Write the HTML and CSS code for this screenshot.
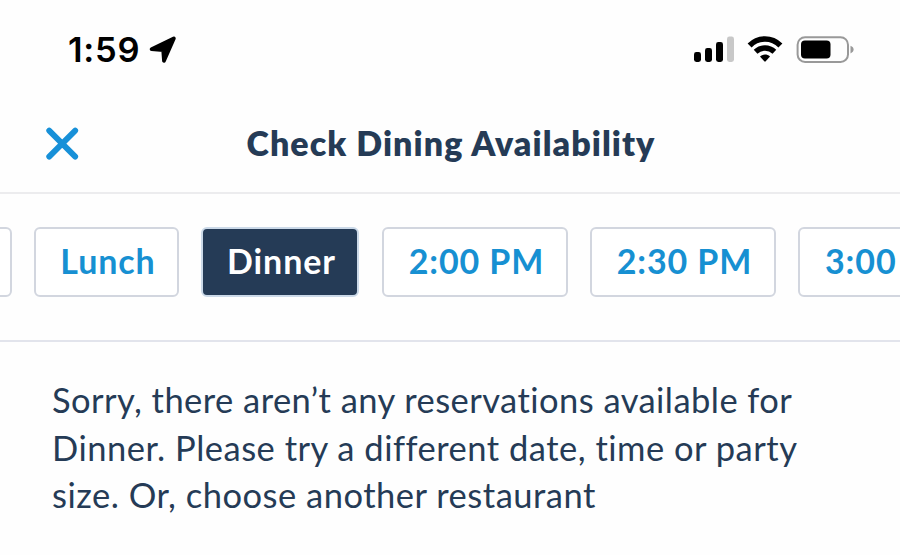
FILE: index.html
```html
<!DOCTYPE html>
<html lang="en">
<head>
    <meta charset="UTF-8">
    <meta name="viewport" content="width=device-width, initial-scale=1.0">
    <title>Check Dining Availability</title>
    <link rel="stylesheet" href="styles.css">
</head>
<body>

    <div class="status-bar">
        <div class="clock">
            <span class="time">1:59</span>
            <svg class="location" width="28" height="28" viewBox="0 0 28 28">
                <path d="M2.6 13.1 L24.8 2.4 L15 24.8 L14.2 14 Z" fill="#000" stroke="#000" stroke-width="3.8" stroke-linejoin="round"/>
            </svg>
        </div>
        <div class="status-icons">
            <svg class="signal" width="40" height="27" viewBox="0 0 40 27">
                <rect x="0" y="16" width="7" height="10" rx="2.4"/>
                <rect x="11" y="12" width="7" height="14" rx="2.4"/>
                <rect x="22" y="6" width="7" height="20" rx="2.4"/>
                <rect x="33" y="0.5" width="7" height="25.5" rx="2.4" fill="#c8c8c8"/>
            </svg>
            <svg class="wifi" width="36" height="27" viewBox="0 0 36 27">
                <path d="M2.6 9.4 C11.2 0.8 24.8 0.8 33.4 9.4" fill="none" stroke="#000" stroke-width="5.6"/>
                <path d="M8.6 15.8 C14 10.7 22 10.7 27.4 15.8" fill="none" stroke="#000" stroke-width="5.4"/>
                <path d="M13 20.4 C16 18 20 18 23 20.4 L18.7 25.3 Q18 26 17.3 25.3 Z"/>
            </svg>
            <svg class="battery" width="58" height="28" viewBox="0 0 58 28">
                <rect x="1.6" y="1.2" width="50.4" height="24.8" rx="7.5" fill="none" stroke="#999" stroke-width="2"/>
                <rect x="5" y="4.5" width="29.5" height="18" rx="4"/>
                <path d="M54.5 9.8 Q57.6 11 57.6 13.6 Q57.6 16.2 54.5 17.4 Z" fill="#999"/>
            </svg>
        </div>
    </div>

    <header class="header">
        <button class="close-btn" aria-label="Close">
            <svg width="34" height="34" viewBox="0 0 34 34">
                <path d="M4.2 3.6 L30.2 29.6 M30.2 3.6 L4.2 29.6" stroke="#1790d8" stroke-width="5.8" stroke-linecap="round"/>
            </svg>
        </button>
        <h1>Check Dining Availability</h1>
    </header>

    <nav class="times">
        <button class="chip chip-meal"></button>
        <button class="chip chip-lunch">Lunch</button>
        <button class="chip chip-dinner selected">Dinner</button>
        <button class="chip">2:00 PM</button>
        <button class="chip">2:30 PM</button>
        <button class="chip chip-last">3:00</button>
    </nav>

    <main class="message">
        <p>
            <span class="line line-1">Sorry, there aren’t any reservations available for</span>
            <span class="line line-2">Dinner. Please try a different date, time or party</span>
            <span class="line line-3">size. Or, choose another restaurant</span>
        </p>
    </main>

</body>
</html>
```
FILE: styles.css
```css
* {
    box-sizing: border-box;
}
body {
    margin: 0;
    background-color: #fefefe;
    font-family: Lato, "Open Sans", sans-serif;
    color: #253b56;
    overflow: hidden;
}
/* Status bar */
.status-bar {
    display: flex;
    justify-content: space-between;
    height: 96px;
    padding: 36px 46px 0 68px;
}
.clock {
    display: flex;
}
.time {
    width: 71px;
    font-family: Inter, sans-serif;
    font-size: 34.5px;
    font-weight: 600;
    line-height: 28px;
    letter-spacing: 0.7px;
    white-space: nowrap;
    color: #000;
}
.location {
    margin-left: 10px;
}
.status-icons {
    display: flex;
}
.signal {
    margin-right: 13px;
}
.wifi {
    margin-right: 13px;
}
/* Header */
.header {
    display: grid;
    grid-template-columns: 200px 1fr 200px;
    align-items: center;
    height: 98px;
    border-bottom: 2px solid #ececee;
}
.close-btn {
    width: 34px;
    height: 34px;
    margin-left: 45px;
    padding: 0;
    border: none;
    background: none;
}
.close-btn svg {
    display: block;
}
h1 {
    margin: 0 0 3px;
    padding-left: 2px;
    font-size: 34px;
    font-weight: 800;
    line-height: 40px;
    text-align: center;
    white-space: nowrap;
    letter-spacing: 1.06px;
}
/* Meal and time buttons */
.times {
    display: flex;
    gap: 22px;
    height: 148px;
    padding-top: 33px;
    overflow: hidden;
    border-bottom: 2px solid #e2e4ec;
}
.chip {
    flex: none;
    width: 186px;
    height: 70px;
    padding: 0 0 4px 3px;
    border: 2px solid #d2d6df;
    border-radius: 6px;
    background-color: #fff;
    color: #1790d2;
    font-family: inherit;
    font-size: 34px;
    font-weight: 700;
    letter-spacing: 0.9px;
    white-space: nowrap;
}
.chip-meal {
    width: 145px;
    margin-left: -133px;
}
.chip-lunch {
    width: 145px;
}
.chip-dinner {
    width: 158px;
    margin-right: 1px;
}
.chip-last {
    padding-left: 25px;
    text-align: left;
}
.selected {
    border-color: #cbd9e8;
    background-color: #253b56;
    color: #fff;
}
/* Result message */
.message {
    padding: 34px 52px 0;
}
.message p {
    margin: 0;
    font-size: 34.5px;
    line-height: 47.5px;
}
.line {
    display: block;
    white-space: nowrap;
    letter-spacing: 0.45px;
}
.line-2,
.line-3 {
    letter-spacing: 0.5px;
}
```
